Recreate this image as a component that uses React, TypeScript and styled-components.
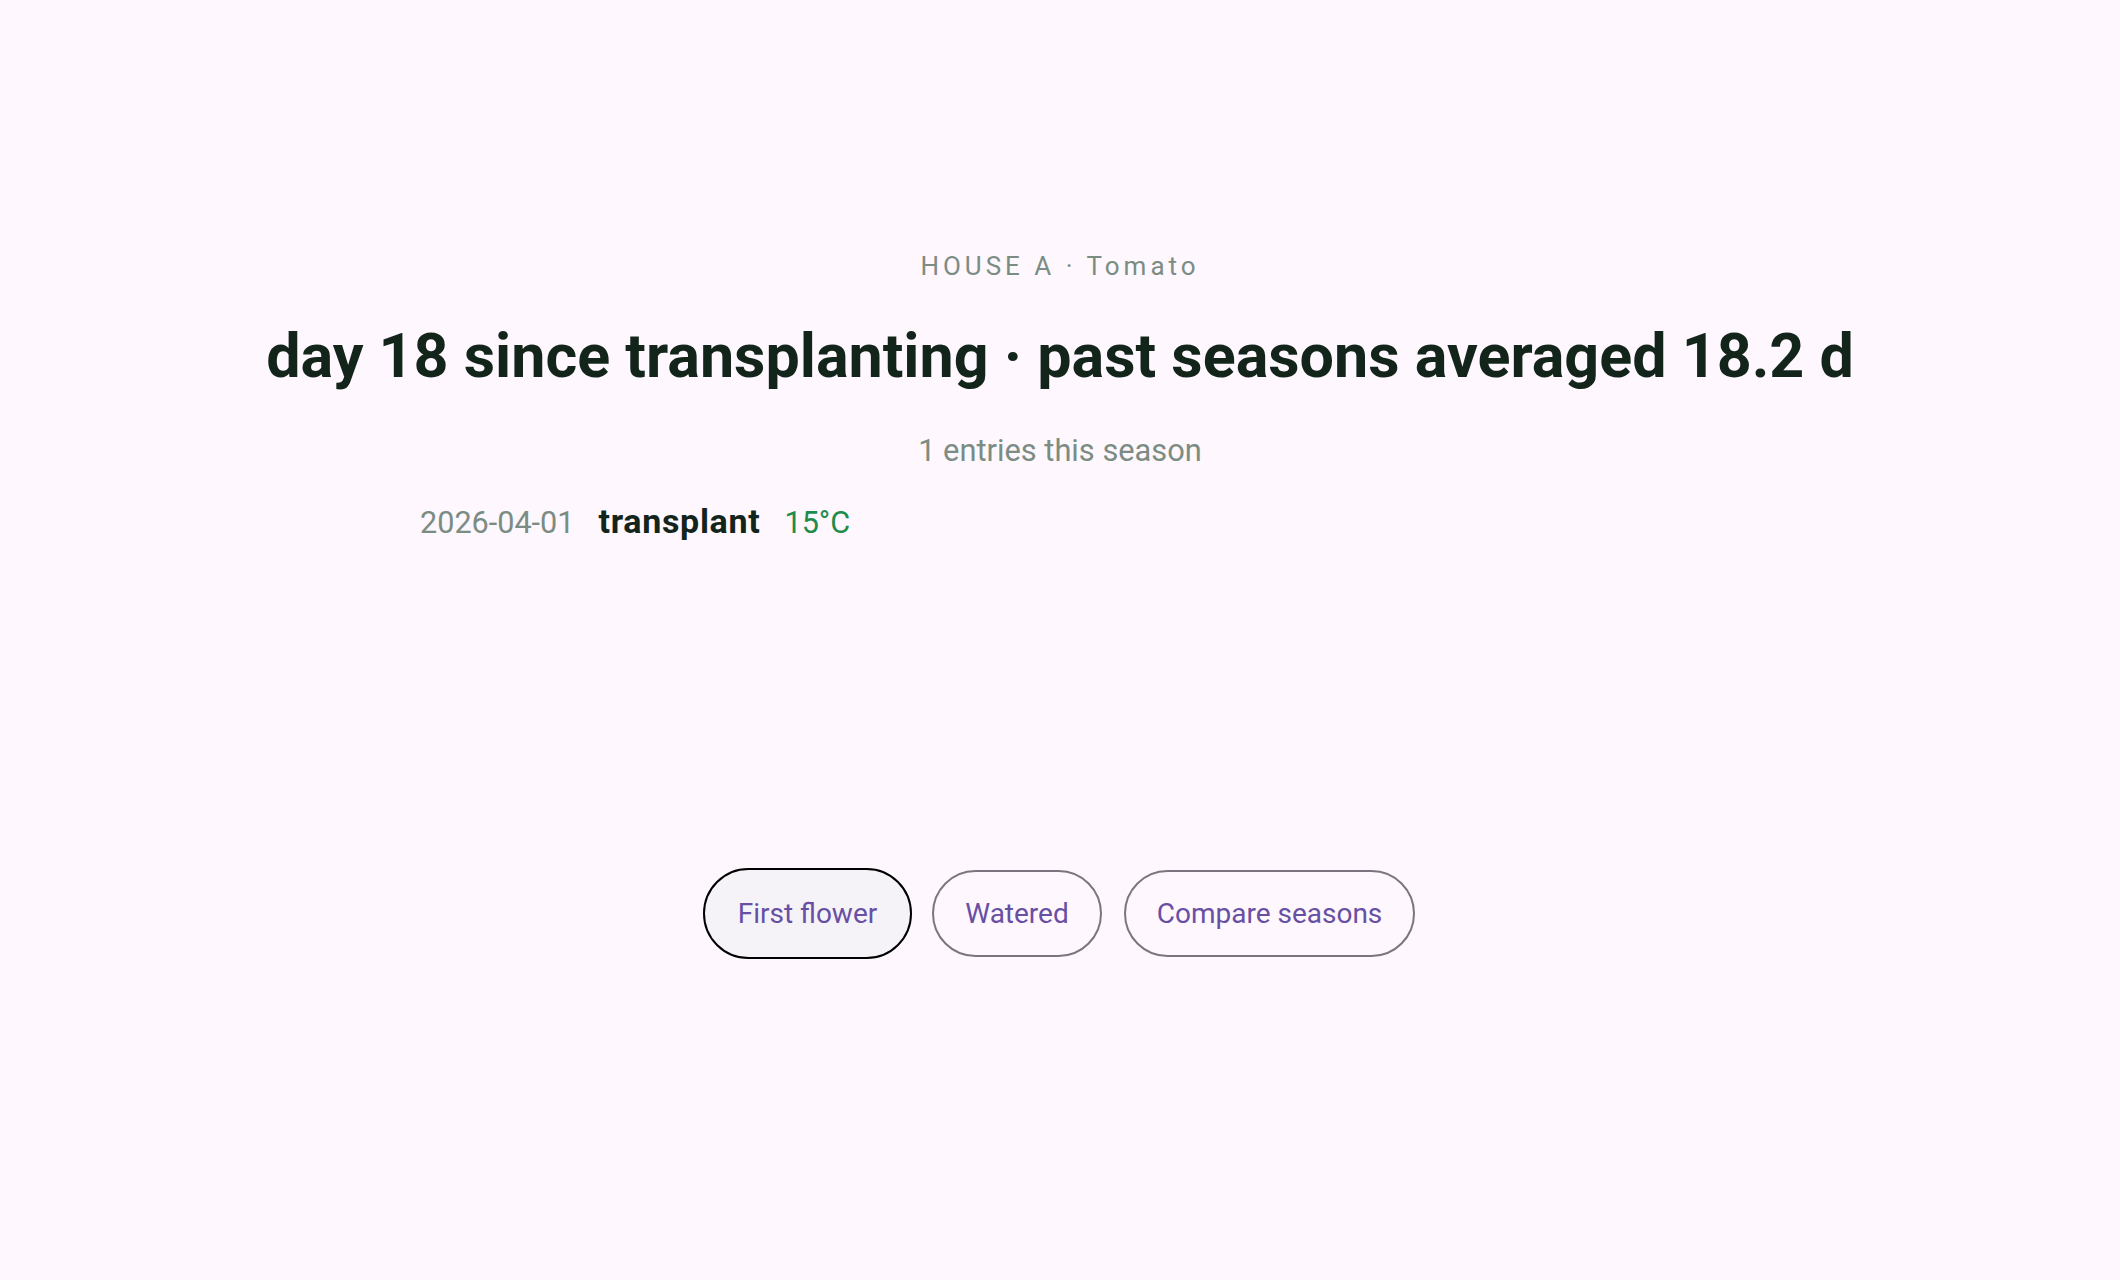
import styled, { createGlobalStyle } from "styled-components";

const GlobalStyle = createGlobalStyle`
  html, body {
    margin: 0;
    padding: 0;
    background: #fef7fd;
    font-family: Roboto, "Noto Sans", "Liberation Sans", sans-serif;
  }
`;

const Page = styled.main`
  min-height: 100vh;
  box-sizing: border-box;
  padding-top: 251px;
`;

const Column = styled.div`
  max-width: 1280px;
  margin: 0 auto;
  display: flex;
  flex-direction: column;
  align-items: center;
`;

const Overline = styled.div`
  font-size: 26px;
  line-height: 1.2;
  letter-spacing: 4px;
  color: #7b8c83;
  text-transform: uppercase;

  span {
    text-transform: none;
  }
`;

const Title = styled.h1`
  margin: 38px 0 0;
  font-size: 61px;
  line-height: 1.2;
  font-weight: 700;
  color: #13241b;
  white-space: nowrap;
`;

const Subtitle = styled.p`
  margin: 40px 0 0;
  font-size: 30.8px;
  line-height: 1.2;
  color: #7b8c83;
`;

const EntryList = styled.ul`
  list-style: none;
  margin: 33px 0 0;
  padding: 0;
  align-self: stretch;
  min-height: 37px;
`;

const Entry = styled.li`
  display: flex;
  align-items: baseline;
  gap: 24px;
  font-size: 30.6px;
  line-height: 37px;
`;

const EntryDate = styled.span`
  color: #7b8c83;
`;

const EntryKind = styled.span`
  font-size: 34px;
  font-weight: 700;
  letter-spacing: 0.7px;
  color: #13241b;
`;

const EntryTemp = styled.span`
  color: #1d8c4c;
`;

const Actions = styled.div`
  margin-top: 329px;
  display: flex;
  gap: 22px;
`;

const Pill = styled.button<{ $focused?: boolean }>`
  box-sizing: border-box;
  height: 87px;
  padding: 0 31px;
  border-radius: 999px;
  border: 2px solid ${(p) => (p.$focused ? "transparent" : "#7a757f")};
  background: ${(p) => (p.$focused ? "#f6f3f8" : "transparent")};
  outline: ${(p) => (p.$focused ? "2.5px solid #000" : "none")};
  outline-offset: 0;
  font-family: inherit;
  font-size: 28px;
  font-weight: 400;
  letter-spacing: 0;
  color: #6750a4;
  cursor: pointer;
`;

export default function App() {
  return (
    <>
      <GlobalStyle />
      <Page>
        <Column>
          <Overline>
            House A · <span>Tomato</span>
          </Overline>
          <Title>day 18 since transplanting · past seasons averaged 18.2 d</Title>
          <Subtitle>1 entries this season</Subtitle>
          <EntryList>
            <Entry>
              <EntryDate>2026-04-01</EntryDate>
              <EntryKind>transplant</EntryKind>
              <EntryTemp>15°C</EntryTemp>
            </Entry>
          </EntryList>
          <Actions>
            <Pill $focused>First flower</Pill>
            <Pill>Watered</Pill>
            <Pill>Compare seasons</Pill>
          </Actions>
        </Column>
      </Page>
    </>
  );
}
